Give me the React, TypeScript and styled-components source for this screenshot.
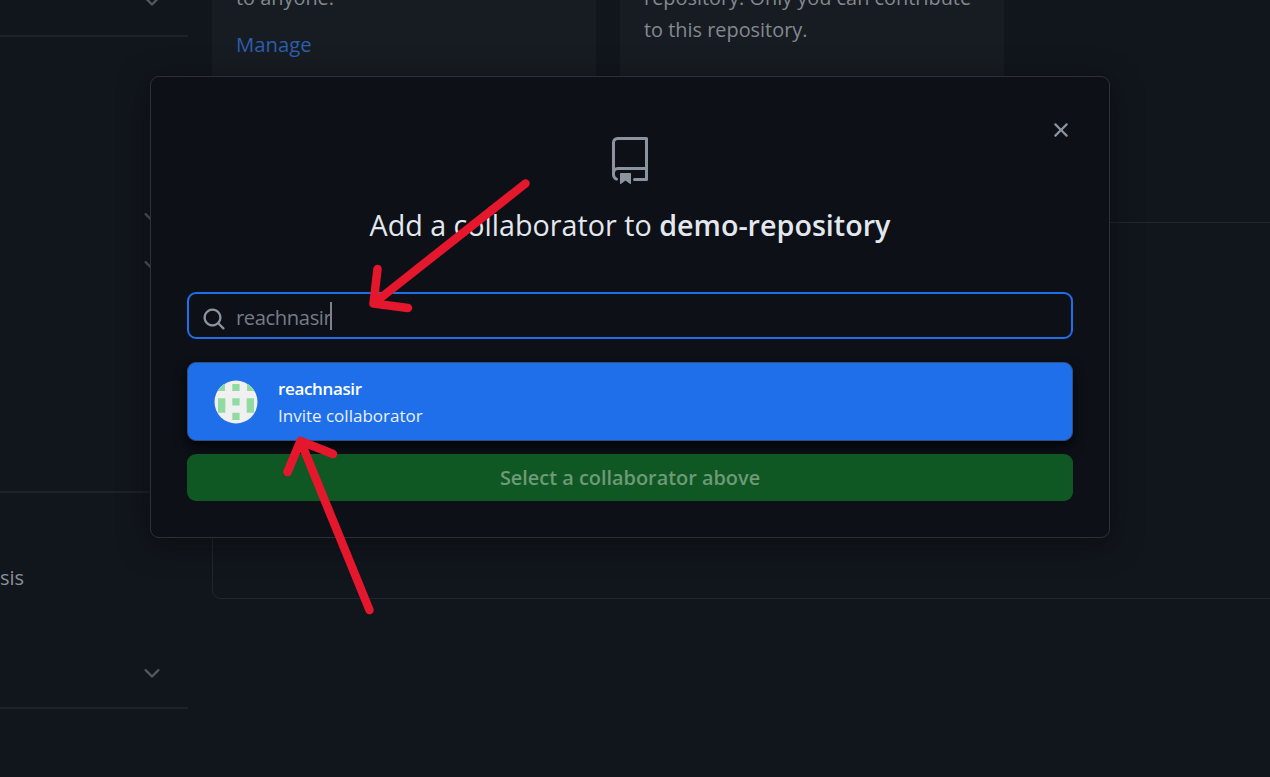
import React from "react";
import styled, { createGlobalStyle } from "styled-components";

const Global = createGlobalStyle`
  *, *::before, *::after { box-sizing: border-box; }
  body {
    margin: 0;
    background: #11161d;
    color: #8b949e;
    font-family: "Open Sans", "Noto Sans", sans-serif;
    overflow: hidden;
  }
`;

const Page = styled.div`
  position: relative;
  display: flex;
  gap: 24px;
  width: 1270px;
  height: 777px;
  overflow: hidden;
`;

const Sidebar = styled.nav`
  display: flex;
  flex-direction: column;
  width: 188px;
  flex: none;
`;

const Group = styled.section<{ $height: number; $pad?: number }>`
  display: flex;
  flex-direction: column;
  flex: none;
  height: ${(p) => p.$height}px;
  padding-top: ${(p) => p.$pad ?? 0}px;
  border-bottom: 2px solid #1d2229;
`;

const NavItem = styled.div<{ $height: number; $shift?: number }>`
  display: flex;
  flex: none;
  align-items: flex-start;
  height: ${(p) => p.$height}px;
  margin-top: ${(p) => p.$shift ?? 0}px;
  padding-right: 24px;
  font-size: 20px;
  line-height: 32px;
  color: #8a9097;
  white-space: nowrap;

  svg { margin-left: auto; fill: #535961; }
`;

const CutLabel = styled.span`
  display: flex;
  justify-content: flex-end;
  width: 24px;
`;

const Main = styled.main`
  display: flex;
  flex-direction: column;
  flex: 1;
`;

const Cards = styled.div`
  display: flex;
  gap: 24px;
  height: 150px;
`;

const Card = styled.div`
  width: 384px;
  height: 120px;
  padding: 0 24px;
  background: #171c22;
`;

const CardText = styled.p`
  margin: -18px 0 0;
  font-size: 19.9px;
  line-height: 31.5px;
  color: #83898f;
  white-space: nowrap;
`;

const CardLink = styled.a`
  display: block;
  margin-top: 15px;
  font-size: 20.3px;
  line-height: 31.5px;
  color: #2d5eaa;
`;

const AccessBox = styled.div`
  height: 377px;
  margin: 72px -12px 0 0;
  border: 1px solid #22272e;
  border-radius: 9px;
`;

const Dialog = styled.div`
  position: absolute;
  left: 150px;
  top: 76px;
  display: flex;
  flex-direction: column;
  width: 960px;
  height: 462px;
  padding: 0 36px;
  background: #0d1017;
  border: 1px solid #2c3138;
  border-radius: 9px;
  box-shadow: 0 6px 30px rgba(10, 10, 10, 0.55);
`;

const CloseButton = styled.button`
  align-self: flex-end;
  display: flex;
  margin: 41px 0 0;
  padding: 0;
  border: 0;
  background: none;
  svg { fill: #8b949e; }
`;

const Header = styled.header`
  display: flex;
  flex-direction: column;
  align-items: center;
  margin-top: -5px;
  svg { fill: #8b949e; }
`;

const Title = styled.h1`
  margin: 19px 0 0;
  font-size: 28.7px;
  line-height: 42px;
  font-weight: 400;
  color: #e2e8ee;
  white-space: nowrap;

  strong {
    font-weight: 600;
  }
`;

const SearchField = styled.div`
  display: flex;
  align-items: center;
  gap: 10px;
  height: 47px;
  margin-top: 46px;
  padding: 6px 13px 0;
  border: 2px solid #1f6feb;
  border-radius: 9px;
  svg { fill: #8b949e; }
`;

const Query = styled.span`
  display: flex;
  align-items: center;
  margin-top: -3px;
  font-size: 20.2px;
  line-height: 30px;
  letter-spacing: -0.4px;
  color: #757c85;
`;

const Caret = styled.i`
  width: 2px;
  height: 28px;
  margin-top: -3px;
  margin-left: -1px;
  background: #7c838c;
`;

const Result = styled.div`
  display: flex;
  align-items: center;
  gap: 20px;
  height: 79px;
  margin-top: 23px;
  padding-left: 26px;
  background: #1f6feb;
  border: 1px solid #30507f;
  border-radius: 9px;
  box-shadow: 0 6px 12px rgba(1, 4, 9, 0.9);
`;

const ResultText = styled.div`
  display: flex;
  flex-direction: column;
  font-size: 17px;
  line-height: 27px;
  color: #e9f1fd;
`;

const Login = styled.b`
  font-size: 17px;
  letter-spacing: -0.35px;
  font-weight: 600;
  color: #fff;
`;

const Submit = styled.button`
  height: 47px;
  margin-top: 13px;
  padding: 1px 0 0;
  border: 0;
  border-radius: 9px;
  background: #105823;
  color: #6d9a77;
  font: 600 19.9px/30px "Open Sans", sans-serif;
`;

const Annotations = styled.svg`
  position: absolute;
  inset: 0;
  fill: none;
  stroke: #e5172c;
  stroke-width: 8.5;
  stroke-linecap: round;
  stroke-linejoin: round;
`;

const Chevron = () => (
  <svg width="24" height="24" viewBox="0 0 16 16">
    <path d="M12.78 6.22a.75.75 0 010 1.06l-4.25 4.25a.75.75 0 01-1.06 0L3.22 7.28a.75.75 0 011.06-1.06L8 9.94l3.72-3.72a.75.75 0 011.06 0z" />
  </svg>
);

const CloseIcon = () => (
  <svg width="24" height="24" viewBox="0 0 16 16">
    <path d="M3.72 3.72a.75.75 0 011.06 0L8 6.94l3.22-3.22a.75.75 0 111.06 1.06L9.06 8l3.22 3.22a.75.75 0 11-1.06 1.06L8 9.06l-3.22 3.22a.75.75 0 01-1.06-1.06L6.94 8 3.72 4.78a.75.75 0 010-1.06z" />
  </svg>
);

const SearchIcon = () => (
  <svg width="24" height="24" viewBox="0 0 16 16">
    <path d="M11.5 7a4.499 4.499 0 11-8.998 0A4.499 4.499 0 0111.5 7zm-.82 4.74a6 6 0 111.06-1.06l3.04 3.04a.75.75 0 11-1.06 1.06l-3.04-3.04z" fillRule="evenodd" />
  </svg>
);

const RepoIcon = () => (
  <svg width="48" height="48" viewBox="0 0 24 24">
    <path fillRule="evenodd" d="M3 2.75A2.75 2.75 0 015.75 0h14.5a.75.75 0 01.75.75v20.5a.75.75 0 01-.75.75h-6a.75.75 0 010-1.5h5.25v-4H6A1.5 1.5 0 004.5 18v.75c0 .716.43 1.334 1.05 1.605a.75.75 0 01-.6 1.374A3.25 3.25 0 013 18.75v-16zM19.5 1.5H5.75c-.69 0-1.25.56-1.25 1.25v12.651A2.989 2.989 0 016 15h13.5V1.5z" />
    <path d="M7 18.25a.25.25 0 01.25-.25h5a.25.25 0 01.25.25v5.01a.25.25 0 01-.397.201l-2.206-1.604a.25.25 0 00-.294 0L7.397 23.46a.25.25 0 01-.397-.2v-5.01z" />
  </svg>
);

const Avatar = () => (
  <svg width="44" height="44" viewBox="0 0 44 44">
    <defs>
      <clipPath id="round"><circle cx="22" cy="22" r="21.5" /></clipPath>
    </defs>
    <g clipPath="url(#round)">
      <rect width="44" height="44" fill="#f0f0f0" />
      <g fill="#8fdba2">
        <path d="M4 4h7v7H4zM18.3 4h7.3v7h-7.3zM33 4h7v7h-7z" />
        <path d="M4 18.3h7.3v14.5H4zM32.7 18.3H40v14.5h-7.3z" />
        <path d="M18.3 18.3h7.3v7.3h-7.3zM18.3 32.7h7.3v7.3h-7.3z" />
      </g>
    </g>
  </svg>
);

export default function App() {
  return (
    <>
      <Global />
      <Page>
        <Sidebar>
          <Group $height={37}>
            <NavItem $height={24} $shift={-12}><Chevron /></NavItem>
          </Group>
          <Group $height={456} $pad={167}>
            <NavItem $height={48}><Chevron /></NavItem>
            <NavItem $height={48}><Chevron /></NavItem>
          </Group>
          <Group $height={216} $pad={69}>
            <NavItem $height={98}><CutLabel>Code analysis</CutLabel></NavItem>
            <NavItem $height={24}><Chevron /></NavItem>
          </Group>
        </Sidebar>
        <Main>
          <Cards>
            <Card>
              <CardText>to anyone.</CardText>
              <CardLink>Manage</CardLink>
            </Card>
            <Card>
              <CardText>repository. Only you can contribute<br />to this repository.</CardText>
            </Card>
          </Cards>
          <AccessBox />
        </Main>
        <Dialog>
          <CloseButton aria-label="Close"><CloseIcon /></CloseButton>
          <Header>
            <RepoIcon />
            <Title>Add a collaborator to <strong>demo-repository</strong></Title>
          </Header>
          <SearchField>
            <SearchIcon />
            <Query>reachnasir<Caret /></Query>
          </SearchField>
          <Result>
            <Avatar />
            <ResultText>
              <Login>reachnasir</Login>
              <span>Invite collaborator</span>
            </ResultText>
          </Result>
          <Submit>Select a collaborator above</Submit>
        </Dialog>
        <Annotations width="1270" height="777">
          <path d="M525.5 183.5L373.5 303.5M377.5 269L373.5 303.5L408 308" />
          <path d="M369.5 610L300.5 441M287.5 472L300.5 441L333 454" />
        </Annotations>
      </Page>
    </>
  );
}
